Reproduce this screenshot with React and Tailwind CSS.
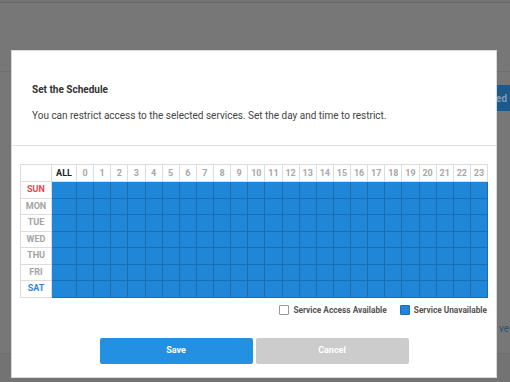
import React from 'react'

const hours = Array.from({ length: 24 }, (_, i) => i)
const days = [
  { name: 'SUN', color: 'text-[#e8474f]' },
  { name: 'MON', color: 'text-[#a3a3a3]' },
  { name: 'TUE', color: 'text-[#a3a3a3]' },
  { name: 'WED', color: 'text-[#a3a3a3]' },
  { name: 'THU', color: 'text-[#a3a3a3]' },
  { name: 'FRI', color: 'text-[#a3a3a3]' },
  { name: 'SAT', color: 'text-[#2f86e0]' },
]

export default function App() {
  return (
    <div className="relative w-[510px] h-[382px] overflow-hidden bg-[#777777] font-['Roboto','Liberation_Sans',sans-serif]">
      {/* page behind the overlay */}
      <div className="flex flex-col h-full">
        <div className="h-[3px] border-b border-[#6a6a6a] bg-[#747474]" />
        <div className="h-[69px] border-b border-[#6e6e6e]" />
        <div className="flex justify-end pt-[13px]">
          <div className="w-[14px] h-[26px] bg-[#1d5a8c] rounded-l-[2px] overflow-hidden flex items-center">
            <span className="text-[10px] font-bold text-[#7c9bb8] whitespace-nowrap">ed</span>
          </div>
        </div>
        <div className="flex justify-end pt-[213px] pr-[1px]">
          <span className="text-[10px] text-[#2f4f70] leading-none">ve</span>
        </div>
        <div className="mt-[19px] flex-1 border-t border-[#6c6c6c] bg-[#737373]" />
      </div>

      {/* modal */}
      <div className="absolute left-[11px] top-[50px] w-[486px] h-[328px] bg-white border border-[#d9d9d9] flex flex-col">
        <div className="px-[20px] pt-[32px] pb-[22px] border-b border-[#e3e3e3]">
          <h2 className="text-[10px] font-bold text-[#333] leading-[14px]">Set the Schedule</h2>
          <p className="mt-[12px] text-[10px] text-[#444] leading-[14px]">
            You can restrict access to the selected services. Set the day and time to restrict.
          </p>
        </div>

        <div className="px-[8px] pt-[18px]">
          <table className="w-[468px] table-fixed border-collapse">
            <colgroup>
              <col className="w-[31px]" />
              <col className="w-[25px]" />
              {hours.map((h) => (
                <col key={h} />
              ))}
            </colgroup>
            <thead>
              <tr className="h-[17px]">
                <th className="border border-[#dcdcdc] bg-white" />
                <th className="border border-[#dcdcdc] bg-white text-[9px] font-bold text-[#222] p-0 leading-none">ALL</th>
                {hours.map((h) => (
                  <th key={h} className="border border-[#dcdcdc] bg-white text-[9px] font-bold text-[#a8a8a8] p-0 leading-none">
                    {h}
                  </th>
                ))}
              </tr>
            </thead>
            <tbody>
              {days.map((d) => (
                <tr key={d.name} className="h-[16.5px]">
                  <td className={`border border-[#dcdcdc] bg-white text-center text-[9px] font-bold p-0 leading-none ${d.color}`}>
                    {d.name}
                  </td>
                  <td className="border border-[#1b6cb0] bg-[#2087d8] p-0" />
                  {hours.map((h) => (
                    <td key={h} className="border border-[#1b6cb0] bg-[#2087d8] p-0" />
                  ))}
                </tr>
              ))}
            </tbody>
          </table>

          <div className="flex justify-end items-center gap-[13px] mt-[6px] pr-[1px]">
            <div className="flex items-center gap-[4px]">
              <span className="w-[10px] h-[10px] border border-[#999] bg-white rounded-[1px]" />
              <span className="text-[8.3px] font-bold text-[#555]">Service Access Available</span>
            </div>
            <div className="flex items-center gap-[4px]">
              <span className="w-[10px] h-[10px] border border-[#1b6cb0] bg-[#2087d8] rounded-[1px]" />
              <span className="text-[8.3px] font-bold text-[#555]">Service Unavailable</span>
            </div>
          </div>
        </div>

        <div className="flex justify-center gap-[3px] mt-[22px]">
          <button className="w-[153px] h-[26px] bg-[#2390e2] rounded-[2px] text-white text-[9px] font-bold">Save</button>
          <button className="w-[153px] h-[26px] bg-[#cccccc] rounded-[2px] text-white text-[9px] font-bold">Cancel</button>
        </div>
      </div>
    </div>
  )
}
